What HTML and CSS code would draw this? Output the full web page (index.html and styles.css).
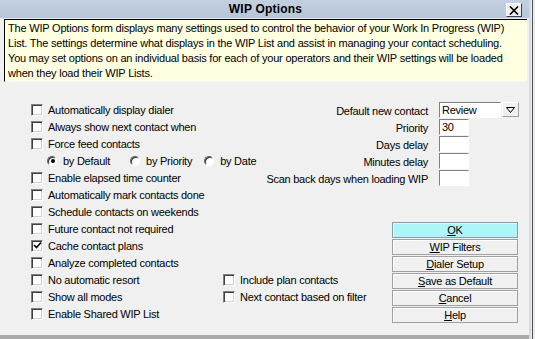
FILE: index.html
```
<!DOCTYPE html>
<html>
<head>
<meta charset="utf-8">
<link rel="stylesheet" href="styles.css">
</head>
<body>
<div class="screen">
  <div class="window">
    <div class="titlebar">
      <span class="title">WIP Options</span>
      <span class="close"><svg width="10" height="9" viewBox="0 0 10 9"><path d="M1 0.5 L9 8.5 M9 0.5 L1 8.5" stroke="#000" stroke-width="1.6"/></svg></span>
    </div>
    <div class="desc">The WIP Options form displays many settings used to control the behavior of your Work In Progress (WIP) List. The settings determine what displays in the WIP List and assist in managing your contact scheduling. You may set options on an individual basis for each of your operators and their WIP settings will be loaded when they load their WIP Lists.</div>
    <div class="content">
      <div class="left">
        <div class="row"><span class="cb"></span>Automatically display dialer</div>
        <div class="row"><span class="cb"></span>Always show next contact when</div>
        <div class="row"><span class="cb"></span>Force feed contacts</div>
        <div class="row radios">
          <span class="ropt"><span class="rb on"></span>by Default</span>
          <span class="ropt"><span class="rb"></span>by Priority</span>
          <span class="ropt"><span class="rb"></span>by Date</span>
        </div>
        <div class="row"><span class="cb"></span>Enable elapsed time counter</div>
        <div class="row"><span class="cb"></span>Automatically mark contacts done</div>
        <div class="row"><span class="cb"></span>Schedule contacts on weekends</div>
        <div class="row"><span class="cb"></span>Future contact not required</div>
        <div class="row"><span class="cb checked"><svg width="9" height="9" viewBox="0 0 9 9"><path d="M1 4 L3.5 6.5 L8 1.5" fill="none" stroke="#000" stroke-width="1.6"/></svg></span>Cache contact plans</div>
        <div class="row"><span class="cb"></span>Analyze completed contacts</div>
        <div class="row"><span class="cb"></span>No automatic resort</div>
        <div class="row"><span class="cb"></span>Show all modes</div>
        <div class="row"><span class="cb"></span>Enable Shared WIP List</div>
      </div>
      <div class="right">
        <div class="form">
          <span class="lbl">Default new contact</span>
          <span class="combo"><span class="field wide">Review</span><span class="arrow"><svg width="9" height="6" viewBox="0 0 9 6"><path d="M0.5 0.5 H8.5 L4.5 5.5 Z" fill="none" stroke="#000" stroke-width="1"/></svg></span></span>
          <span class="lbl">Priority</span>
          <span class="field">30</span>
          <span class="lbl">Days delay</span>
          <span class="field"></span>
          <span class="lbl">Minutes delay</span>
          <span class="field"></span>
          <span class="lbl">Scan back days when loading WIP</span>
          <span class="field"></span>
        </div>
        <div class="lower">
          <div class="mid">
            <div class="row"><span class="cb"></span>Include plan contacts</div>
            <div class="row"><span class="cb"></span>Next contact based on filter</div>
          </div>
          <div class="buttons">
            <div class="btn default"><u>O</u>K</div>
            <div class="btn"><u>W</u>IP Filters</div>
            <div class="btn"><u>D</u>ialer Setup</div>
            <div class="btn"><u>S</u>ave as Default</div>
            <div class="btn"><u>C</u>ancel</div>
            <div class="btn"><u>H</u>elp</div>
          </div>
        </div>
      </div>
    </div>
  </div>
  <div class="edge"></div>
</div>
</body>
</html>
```

FILE: styles.css
```
html, body {
  margin: 0;
  padding: 0;
}
body {
  background: #a9a9a9;
  font-family: "Liberation Sans", Arial, sans-serif;
  font-size: 11px;
  letter-spacing: -0.25px;
  color: #000;
}
.screen {
  width: 535px;
  height: 339px;
  display: flex;
  overflow: hidden;
  background: #a9a9a9;
}
.window {
  width: 529px;
  height: 335px;
  background: #f0f0f0;
  display: flex;
  flex-direction: column;
  flex: none;
}
.edge {
  flex: 1;
  height: 339px;
  background: #eaeaea;
  border-left: 2px solid #d6dbe3;
  box-sizing: border-box;
}
.edge::after {
  content: "";
  display: block;
  width: 1px;
  height: 339px;
  margin-left: 1px;
  background: #555;
}
.titlebar {
  height: 18px;
  background: linear-gradient(to bottom, #c3d0df, #b7c6d8);
  display: flex;
  align-items: center;
  justify-content: center;
  position: relative;
  border-bottom: 1px solid #e6ebf1;
}
.title {
  font-family: "Liberation Sans", Arial, sans-serif;
  font-weight: bold;
  font-size: 12px;
  letter-spacing: 0.2px;
  margin-left: 2px;
}
.close {
  position: absolute;
  right: 7px;
  top: 3px;
  width: 14px;
  height: 12px;
  background: #eee;
  border: 1px solid;
  border-color: #fff #404040 #404040 #fff;
  display: flex;
  align-items: center;
  justify-content: center;
}
.desc {
  margin-left: 4px;
  margin-right: 2px;
  height: 60px;
  background: #ffffe1;
  border-top: 1px solid #000;
  border-left: 1px solid #000;
  border-bottom: 1px solid #f6f6f6;
  padding: 1px 19px 0 3px;
  line-height: 15px;
  font-size: 11px;
  letter-spacing: -0.2px;
  overflow: hidden;
}
.content {
  display: flex;
  padding: 19px 0 0 31px;
}
.left {
  width: 192px;
  display: flex;
  flex-direction: column;
}
.row {
  height: 17px;
  display: flex;
  align-items: center;
  white-space: nowrap;
}
.cb {
  width: 12px;
  height: 12px;
  box-sizing: border-box;
  background: #fff;
  border: 1px solid;
  border-color: #808080 #fff #fff #808080;
  box-shadow: inset 1px 1px 0 #404040, inset -1px -1px 0 #d4d0c8;
  margin-right: 5px;
  display: flex;
  align-items: center;
  justify-content: center;
  flex: none;
}
.radios {
  padding-left: 16px;
}
.ropt {
  display: flex;
  align-items: center;
  margin-right: 20px;
}
.ropt:nth-child(2) {
  margin-right: 12px;
}
.rb {
  width: 10px;
  height: 10px;
  border-radius: 50%;
  background: #fff;
  box-sizing: border-box;
  border: 1px solid;
  border-color: #606060 #fff #fff #606060;
  box-shadow: inset 1px 1px 0 #303030;
  margin-right: 6px;
  display: flex;
  align-items: center;
  justify-content: center;
  flex: none;
}
.rb.on::after {
  content: "";
  width: 4px;
  height: 4px;
  border-radius: 50%;
  background: #000;
  margin: 1px 0 0 1px;
}
.right {
  display: flex;
  flex-direction: column;
}
.form {
  display: grid;
  grid-template-columns: 205px 80px;
  grid-auto-rows: 17px;
  column-gap: 11px;
  margin-top: 1px;
}
.lbl {
  text-align: right;
  white-space: nowrap;
  align-self: center;
}
.field {
  width: 30px;
  height: 16px;
  box-sizing: border-box;
  background: #fff;
  border: 1px solid;
  border-color: #808080 #fff #fff #808080;
  padding-left: 2px;
  line-height: 14px;
}
.field.wide {
  width: 62px;
}
.combo {
  display: flex;
  gap: 1px;
}
.arrow {
  width: 17px;
  height: 15px;
  box-sizing: border-box;
  background: #f0f0f0;
  border: 1px solid;
  border-color: #fff #a0a0a0 #a0a0a0 #fff;
  display: flex;
  align-items: center;
  justify-content: center;
}
.lower {
  display: flex;
  margin-top: 35px;
}
.mid {
  width: 169px;
  padding-top: 49px;
  display: flex;
  flex-direction: column;
}
.buttons {
  display: flex;
  flex-direction: column;
  gap: 1px;
}
.btn {
  width: 126px;
  height: 16px;
  box-sizing: border-box;
  border: 1px solid #a0a0a0;
  box-shadow: inset 1px 1px 0 #fff;
  background: #f0f0f0;
  text-align: center;
  line-height: 14px;
}
.btn.default {
  background: #aef5fa;
  border-color: #8a9ea0;
  box-shadow: inset 1px 1px 0 #d8fbfd;
}
```
